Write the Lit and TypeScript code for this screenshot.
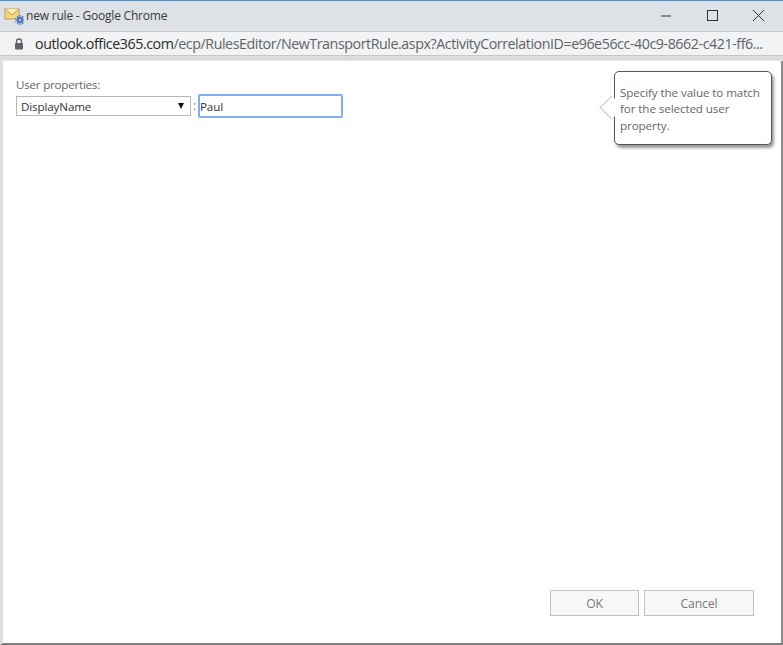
import { LitElement, html, css } from "lit";
import { customElement } from "lit/decorators.js";

@customElement("app-root")
export class AppRoot extends LitElement {
  static styles = css`
    :host { display: block; width: 783px; height: 645px; font-family: "Open Sans", "Noto Sans", sans-serif; }
    .win { box-sizing: border-box; width: 783px; height: 645px; display: flex; flex-direction: column; background: #fff; border-top: 1px solid #3c94dc; position: relative; overflow: hidden; }
    .title { height: 30px; flex: none; display: flex; align-items: center; background: #dee1e6; padding-left: 4px; box-sizing: border-box; }
    .title .txt { font-size: 12px; color: #3a3a3a; margin-left: 2px; letter-spacing: -0.2px; position: relative; top: -1px; }
    .controls { margin-left: auto; display: flex; align-items: center; gap: 0; padding-right: 2px; position: relative; top: -1px; }
    .controls svg { display: block; width: 46px; height: 14px; }
    .addr { height: 25px; flex: none; box-sizing: border-box; background: #f1f3f4; border-top: 1px solid #c8cacd; border-bottom: 1px solid #c4c6c8; display: flex; align-items: center; padding-left: 14px; }
    .url { font-size: 14.25px; color: #5f6368; margin-left: 11px; white-space: nowrap; letter-spacing: -0.44px; }
    .url b { font-weight: 400; color: #2a2b2d; }
    .strip { height: 5px; flex: none; background: #dcdcdc; border-bottom: 1px solid #e8e8e8; box-sizing: border-box; }
    .body { flex: 1; display: flex; flex-direction: column; border-left: 3px solid #dedede; border-right: 2px solid #8c8c8c; border-bottom: 2px solid #7f7f7f; background: #fff; min-height: 0; position: relative; }
    .form { padding: 16px 0 0 13px; flex: 1; }
    .label { font-size: 11.6px; color: #666; line-height: 16px; letter-spacing: -0.22px; }
    .row { display: flex; align-items: center; margin-top: 1px; }
    .select { box-sizing: border-box; width: 175px; height: 20px; border: 1px solid #b8b8b8; display: flex; align-items: center; padding: 0 6px 0 4px; font-size: 11.6px; color: #333; background: #fff; justify-content: space-between; letter-spacing: -0.12px; }
    .arrow { width: 0; height: 0; border-left: 3.5px solid transparent; border-right: 3.5px solid transparent; border-top: 6px solid #111; }
    .colon { width: 7px; text-align: center; font-size: 12px; color: #777; line-height: 14px; }
    .input { box-sizing: border-box; width: 145px; height: 24px; border: 2px solid #7fb0ee; border-radius: 2px; font-size: 11.6px; color: #333; display: flex; align-items: center; padding-left: 0; letter-spacing: -0.1px; }
    .footer { display: flex; justify-content: flex-end; gap: 5px; padding: 0 27px 27px 0; }
    .btn { box-sizing: border-box; height: 26px; border: 1px solid #c2c2c2; background: #f7f7f7; font-size: 12.2px; color: #777; display: flex; align-items: center; justify-content: center; letter-spacing: -0.1px; }
    .ok { width: 89px; }
    .cancel { width: 110px; }
    .tip { position: absolute; left: 614px; top: 70px; box-sizing: border-box; width: 158px; height: 74px; background: #fff; border: 1.5px solid #555; border-radius: 5px; box-shadow: 2px 3px 3px rgba(0,0,0,.4); padding: 13px 5px 0 5px; font-size: 11.65px; line-height: 16.4px; color: #666; letter-spacing: -0.1px; z-index: 2; }
    .tip .nub { position: absolute; left: -12px; top: 26.5px; width: 17px; height: 17px; background: #fff; border-left: 1.5px solid #c4c4c4; border-bottom: 1.5px solid #c4c4c4; transform: rotate(45deg); box-sizing: border-box; }
    .tip span { position: relative; display: block; white-space: nowrap; }
  `;

  render() {
    return html`
      <div class="win">
        <div class="title">
          <svg width="20" height="20" viewBox="0 0 20 20">
            <rect x="1" y="3" width="14" height="10" fill="#f3d778" stroke="#a8914c" stroke-width="0.8"/>
            <path d="M1 3 L8 9 L15 3" fill="#fbeeb0" stroke="#a8914c" stroke-width="0.8"/>
            <circle cx="16" cy="14" r="3.4" fill="#4a78c0"/>
            <circle cx="16" cy="14" r="4.4" fill="none" stroke="#4a78c0" stroke-width="1.2" stroke-dasharray="1.4 1.4"/>
            <circle cx="16" cy="14" r="1" fill="#cfe0f5"/>
          </svg>
          <span class="txt">new rule - Google Chrome</span>
          <div class="controls">
            <svg viewBox="0 0 46 14"><path d="M18 8H28" stroke="#333" stroke-width="1"/></svg>
            <svg viewBox="0 0 46 14"><rect x="18.5" y="2.5" width="10" height="10" fill="none" stroke="#333"/></svg>
            <svg viewBox="0 0 46 14"><path d="M18 2L29 13M29 2L18 13" stroke="#333" stroke-width="1"/></svg>
          </div>
        </div>
        <div class="addr">
          <svg width="10" height="12" viewBox="0 0 10 12">
            <path d="M2.5 5V3.5a2.5 2.5 0 0 1 5 0V5" fill="none" stroke="#5f6368" stroke-width="1.3"/>
            <rect x="1" y="5" width="8" height="6.5" rx="1" fill="#5f6368"/>
          </svg>
          <span class="url"><b>outlook.office365.com</b>/ecp/RulesEditor/NewTransportRule.aspx?ActivityCorrelationID=e96e56cc-40c9-8662-c421-ff6...</span>
        </div>
        <div class="strip"></div>
        <div class="body">
          <div class="form">
            <div class="label">User properties:</div>
            <div class="row">
              <div class="select"><span>DisplayName</span><i class="arrow"></i></div>
              <span class="colon">:</span>
              <div class="input">Paul</div>
            </div>
          </div>
          <div class="footer">
            <div class="btn ok">OK</div>
            <div class="btn cancel">Cancel</div>
          </div>
        </div>
        <div class="tip"><i class="nub"></i><span>Specify the value to match</span><span>for the selected user</span><span>property.</span></div>
      </div>
    `;
  }
}
